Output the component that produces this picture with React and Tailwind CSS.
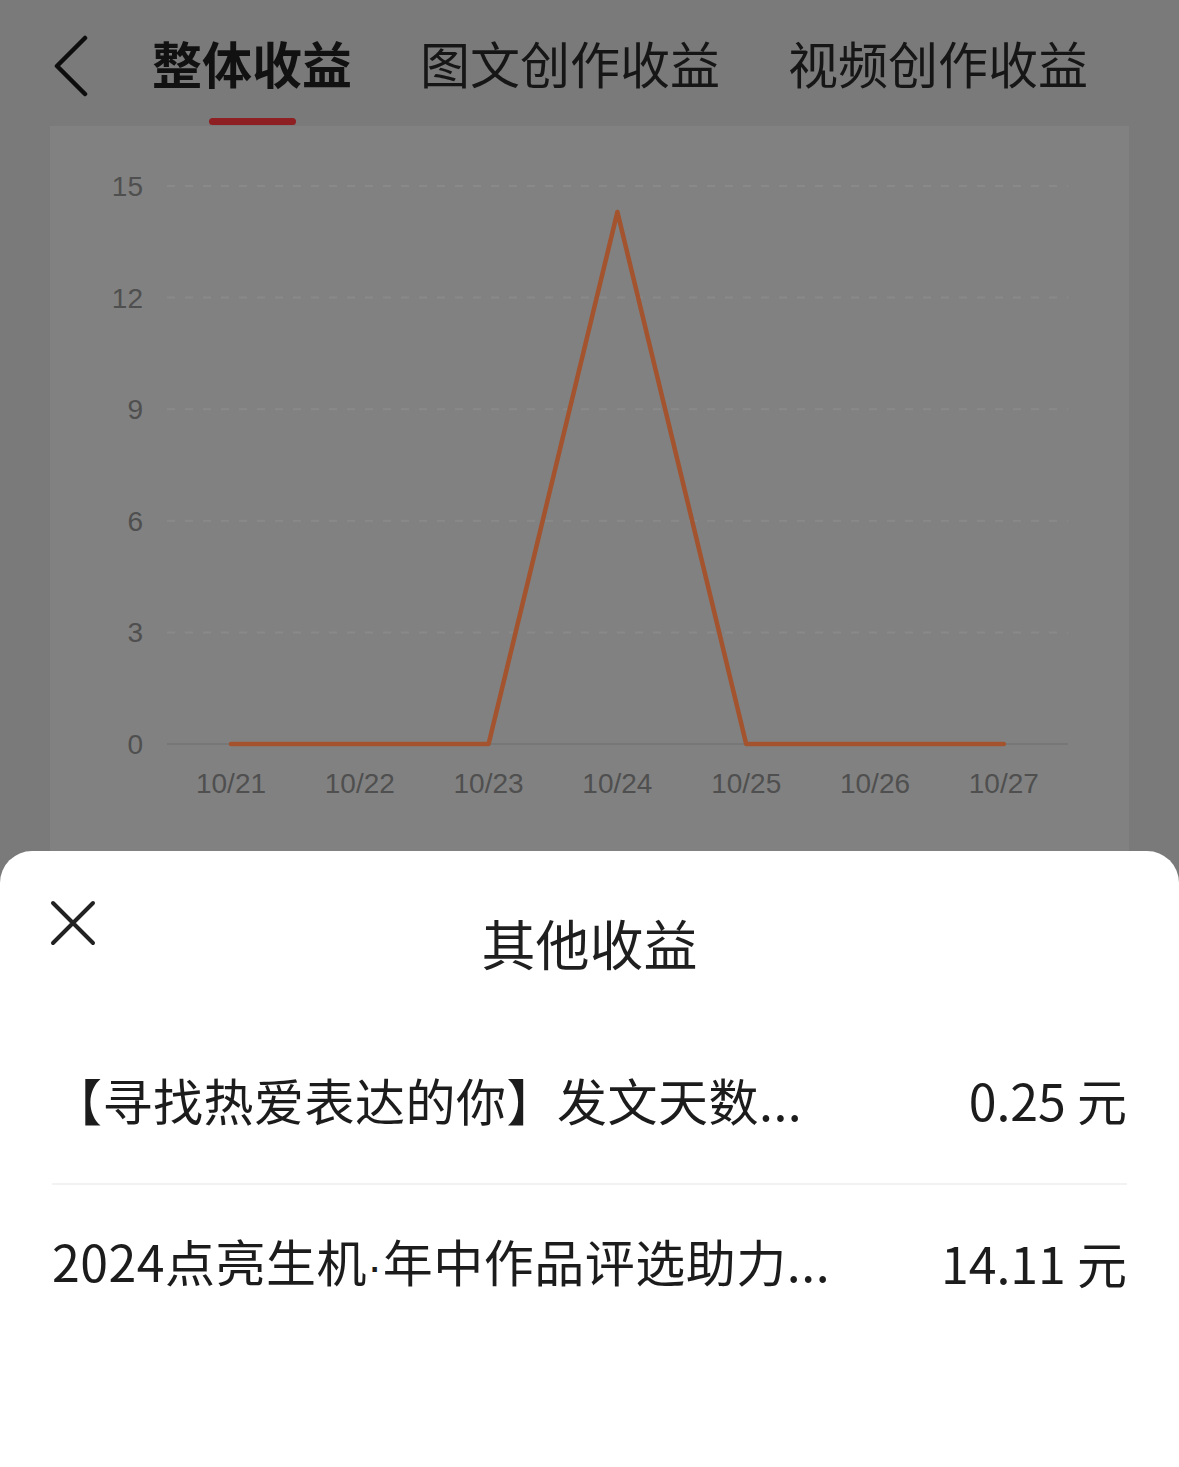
const CN = { fontFamily: '"Noto Sans CJK SC", "Noto Sans", sans-serif' };

const Y_TICKS = [15, 12, 9, 6, 3, 0];
const DAYS = [
  { label: "10/21", value: 0 },
  { label: "10/22", value: 0 },
  { label: "10/23", value: 0 },
  { label: "10/24", value: 14.3 },
  { label: "10/25", value: 0 },
  { label: "10/26", value: 0 },
  { label: "10/27", value: 0 },
];

const TABS = ["整体收益", "图文创作收益", "视频创作收益"];

function Chart() {
  const top = 60;
  const bottom = 618;
  const step = (bottom - top) / 15;
  const xs = DAYS.map((_, i) => 181 + i * 128.8);
  const pts = DAYS.map((d, i) => `${xs[i]},${bottom - d.value * step}`).join(" ");

  return (
    <svg width="1079" height="725" viewBox="0 0 1079 725" className="block">
      {Y_TICKS.map((t) => {
        const y = bottom - t * step;
        return (
          <g key={t}>
            <text
              x="93"
              y={y + 10}
              textAnchor="end"
              fontSize="28"
              fill="#4f4f4f"
              fontFamily="Liberation Sans, Arial, sans-serif"
            >
              {t}
            </text>
            {t === 0 ? (
              <line x1="117" x2="1018" y1={y} y2={y} stroke="#777777" strokeWidth="2" />
            ) : (
              <line
                x1="117"
                x2="1018"
                y1={y}
                y2={y}
                stroke="#898989"
                strokeWidth="2"
                strokeDasharray="8 10"
              />
            )}
          </g>
        );
      })}
      {DAYS.map((d, i) => (
        <text
          key={d.label}
          x={xs[i]}
          y="667"
          textAnchor="middle"
          fontSize="28"
          fill="#4f4f4f"
          fontFamily="Liberation Sans, Arial, sans-serif"
        >
          {d.label}
        </text>
      ))}
      <polyline
        points={pts}
        fill="none"
        stroke="#a3532d"
        strokeWidth="4.5"
        strokeLinejoin="round"
        strokeLinecap="round"
      />
    </svg>
  );
}

export default function App() {
  return (
    <div className="flex min-h-[1467px] w-[1179px] flex-col bg-[#7a7a7a]" style={CN}>
      {/* header tabs */}
      <header className="flex h-[126px] items-start">
        <div className="w-[152px] pl-[52px] pt-[35px]">
          <svg width="40" height="64" viewBox="0 0 40 64">
            <polyline
              points="33,3 5,31 33,59"
              fill="none"
              stroke="#0d0d0d"
              strokeWidth="4.5"
              strokeLinecap="round"
              strokeLinejoin="round"
            />
          </svg>
        </div>
        <nav className="flex gap-[68px]">
          {TABS.map((tab, i) => (
            <div key={tab} className="flex flex-col items-center pt-[37px]">
              <span
                className={
                  i === 0
                    ? "text-[50px] font-bold leading-[50px] text-[#111111]"
                    : "text-[50px] font-normal leading-[50px] text-[#161616]"
                }
              >
                {tab}
              </span>
              {i === 0 && (
                <span className="mt-[31px] h-[7px] w-[87px] rounded-full bg-[#8e1f22]" />
              )}
            </div>
          ))}
        </nav>
      </header>

      {/* chart card */}
      <section className="mx-[50px] h-[725px] bg-[#818181]">
        <Chart />
      </section>

      {/* bottom sheet */}
      <div className="flex-1 rounded-t-[32px] bg-white">
        <div className="grid h-[170px] grid-cols-[1fr_auto_1fr] items-start">
          <div className="pl-[50px] pt-[49px]">
            <svg width="46" height="46" viewBox="0 0 46 46">
              <path
                d="M3 3 L43 43 M43 3 L3 43"
                stroke="#222222"
                strokeWidth="4"
                strokeLinecap="round"
              />
            </svg>
          </div>
          <h2 className="pt-[65px] text-[54px] font-normal leading-[54px] text-[#1f1f1f]">
            其他收益
          </h2>
          <div />
        </div>

        <ul className="px-[52px]">
          <li className="flex h-[164px] items-center justify-between border-b-2 border-[#f2f2f2] pb-[6px]">
            <span className="text-[50px] leading-none tracking-[0.5px] text-[#1c1c1c]">
              【寻找热爱表达的你】发文天数...
            </span>
            <span className="text-[50px] leading-none text-[#1c1c1c]">0.25 元</span>
          </li>
          <li className="flex h-[154px] items-center justify-between">
            <span className="text-[50px] leading-none tracking-[0.5px] text-[#1c1c1c]">
              2024点亮生机
              <span className="font-['Liberation_Sans'] text-[46px]">·</span>
              年中作品评选助力...
            </span>
            <span className="text-[50px] leading-none text-[#1c1c1c]">14.11 元</span>
          </li>
        </ul>
      </div>
    </div>
  );
}
